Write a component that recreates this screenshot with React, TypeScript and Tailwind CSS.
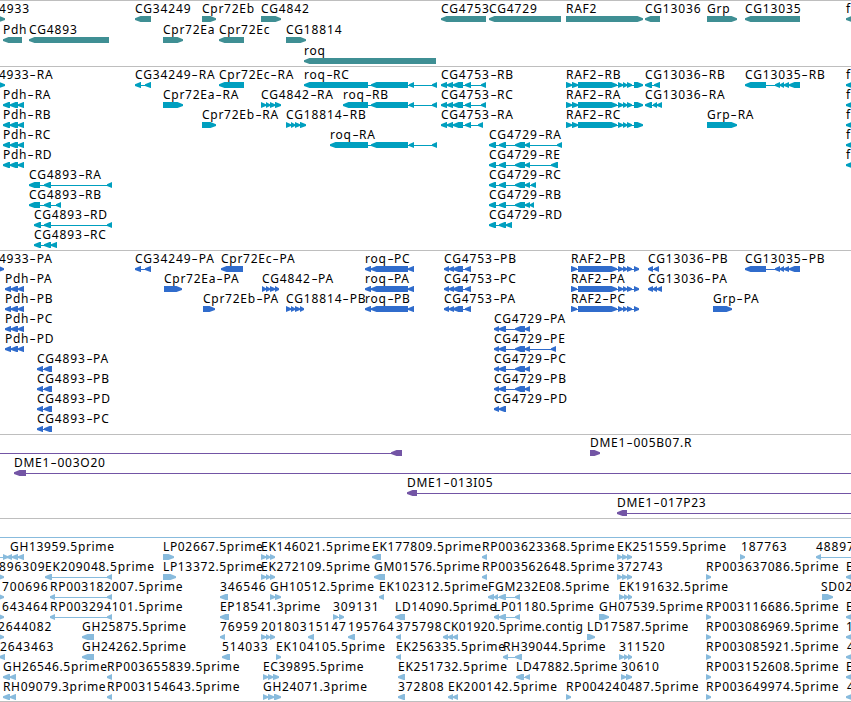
import { Fragment } from 'react'

type Strand = '+' | '-'
type Span = [number, number]

type Feature = {
  name: string
  strand: Strand
  exons: Span[]
  labelX?: number
  // where the connecting line runs when it leaves the visible region
  reach?: Span
}

type Track = {
  id: string
  color: string
  className: string
  rowClassName: string
  rows: Feature[][]
}

const feature = (
  name: string,
  strand: Strand,
  exons: Span[],
  extra: Pick<Feature, 'labelX' | 'reach'> = {},
): Feature => ({ name, strand, exons, ...extra })

const edge = (name: string, labelX = 846): Feature => feature(name, '-', [[846, 858]], { labelX })

const genes: Feature[][] = [
  [
    feature('4933', '+', [[-10, 5]], { labelX: -1 }),
    feature('CG34249', '-', [[135, 151]]),
    feature('Cpr72Eb', '+', [[202, 216]]),
    feature('CG4842', '+', [[261, 281]]),
    feature('CG4753', '-', [[441, 486]]),
    feature('CG4729', '-', [[489, 561]]),
    feature('RAF2', '+', [[566, 643]]),
    feature('CG13036', '-', [[645, 660]]),
    feature('Grp', '+', [[707, 737]]),
    feature('CG13035', '-', [[745, 800]]),
    edge('f'),
  ],
  [
    feature('Pdh', '-', [[3, 22]]),
    feature('CG4893', '-', [[29, 109]]),
    feature('Cpr72Ea', '+', [[163, 183]]),
    feature('Cpr72Ec', '-', [[219, 244]]),
    feature('CG18814', '+', [[286, 306]]),
  ],
  [feature('roq', '-', [[304, 436]])],
]

const pdhR: Span[] = [[3, 10], [10, 18], [18, 24]]
const roqTail: Span[] = [[371, 408], [409, 414], [432, 437]]
const cg4753R: Span[] = [[441, 447], [447, 453], [453, 463], [465, 471], [481, 486]]
const cg4729R: Span[] = [[489, 496], [499, 506], [515, 525]]
const raf2R: Span[] = [[566, 572], [572, 578], [578, 617], [618, 623], [623, 627], [627, 632], [634, 643]]
const cg13035: Span[] = [[745, 766], [775, 780], [780, 784], [784, 789], [789, 800]]

const transcripts: Feature[][] = [
  [
    feature('4933-RA', '+', [[-5, 5]], { labelX: -1 }),
    feature('CG34249-RA', '-', [[135, 141], [145, 151]]),
    feature('Cpr72Ec-RA', '-', [[219, 244]]),
    feature('roq-RC', '-', [[304, 368], ...roqTail]),
    feature('CG4753-RB', '-', cg4753R),
    feature('RAF2-RB', '+', raf2R),
    feature('CG13036-RB', '-', [[645, 652], [654, 660]]),
    feature('CG13035-RB', '-', cg13035),
    edge('f'),
  ],
  [
    feature('Pdh-RA', '-', pdhR),
    feature('Cpr72Ea-RA', '+', [[163, 183]]),
    feature('CG4842-RA', '+', [[261, 266], [266, 270], [270, 275], [275, 281]]),
    feature('roq-RB', '-', [[343, 368], ...roqTail]),
    feature('CG4753-RC', '-', cg4753R),
    feature('RAF2-RA', '+', raf2R),
    feature('CG13036-RA', '-', [[645, 652], [653, 657], [657, 662]]),
    edge('f'),
  ],
  [
    feature('Pdh-RB', '-', pdhR),
    feature('Cpr72Eb-RA', '+', [[202, 216]]),
    feature('CG18814-RB', '+', [[286, 291], [291, 295], [295, 300], [300, 306]]),
    feature('CG4753-RA', '-', [...cg4753R.slice(0, 4), [478, 483]]),
    feature('RAF2-RC', '+', raf2R),
    feature('Grp-RA', '+', [[707, 737]]),
    edge('f'),
  ],
  [
    feature('Pdh-RC', '-', pdhR),
    feature('roq-RA', '-', [[330, 368], ...roqTail]),
    feature('CG4729-RA', '-', [...cg4729R, [525, 530], [557, 562]]),
    edge('f'),
  ],
  [
    feature('Pdh-RD', '-', pdhR),
    feature('CG4729-RE', '-', [...cg4729R, [525, 530], [551, 558]]),
    edge('f'),
  ],
  [
    feature('CG4893-RA', '-', [[29, 40], [44, 51], [107, 112]]),
    feature('CG4729-RC', '-', [...cg4729R, [525, 530], [531, 536]]),
  ],
  [
    feature('CG4893-RB', '-', [[29, 40], [44, 51], [56, 61]]),
    feature('CG4729-RB', '-', [...cg4729R, [525, 530], [530, 534]]),
  ],
  [
    feature('CG4893-RD', '-', [[34, 41], [44, 51], [107, 112]]),
    feature('CG4729-RD', '-', [[489, 496], [499, 506], [506, 512]]),
  ],
  [feature('CG4893-RC', '-', [[34, 41], [44, 51], [51, 57]])],
]

const pdhP: Span[] = [[5, 11], [11, 18], [18, 24]]
const roqP: Span[] = [[365, 371], [371, 408], [408, 414]]
const cg4753P: Span[] = [[444, 449], [449, 454], [453, 463], [465, 471]]
const cg4729P: Span[] = [[494, 499], [499, 506], [515, 525], [525, 530]]
const cg4893P: Span[] = [[37, 43], [44, 52]]
const raf2P: Span[] = [[571, 577], [578, 617], [618, 623], [623, 627], [627, 632], [634, 639]]

const proteins: Feature[][] = [
  [
    feature('4933-PA', '+', [[-5, 4]], { labelX: -1 }),
    feature('CG34249-PA', '-', [[135, 141], [145, 151]]),
    feature('Cpr72Ec-PA', '-', [[221, 243]]),
    feature('roq-PC', '-', roqP),
    feature('CG4753-PB', '-', cg4753P),
    feature('RAF2-PB', '+', raf2P),
    feature('CG13036-PB', '-', [[648, 653], [654, 659]]),
    feature('CG13035-PB', '-', cg13035),
  ],
  [
    feature('Pdh-PA', '-', pdhP),
    feature('Cpr72Ea-PA', '+', [[164, 182]]),
    feature('CG4842-PA', '+', [[262, 266], [266, 270], [270, 275], [275, 279]]),
    feature('roq-PA', '-', roqP),
    feature('CG4753-PC', '-', cg4753P),
    feature('RAF2-PA', '+', raf2P),
    feature('CG13036-PA', '-', [[648, 653], [653, 657], [657, 662]]),
  ],
  [
    feature('Pdh-PB', '-', pdhP),
    feature('Cpr72Eb-PA', '+', [[203, 215]]),
    feature('CG18814-PB', '+', [[286, 291], [291, 295], [295, 300], [300, 304]]),
    feature('roq-PB', '-', roqP),
    feature('CG4753-PA', '-', cg4753P),
    feature('RAF2-PC', '+', raf2P),
    feature('Grp-PA', '+', [[713, 732]]),
  ],
  [feature('Pdh-PC', '-', pdhP), feature('CG4729-PA', '-', cg4729P)],
  [feature('Pdh-PD', '-', pdhP), feature('CG4729-PE', '-', [...cg4729P, [551, 556]])],
  [feature('CG4893-PA', '-', cg4893P), feature('CG4729-PC', '-', cg4729P)],
  [feature('CG4893-PB', '-', cg4893P), feature('CG4729-PB', '-', cg4729P)],
  [feature('CG4893-PD', '-', cg4893P), feature('CG4729-PD', '-', cg4729P.slice(0, 2))],
  [feature('CG4893-PC', '-', cg4893P)],
]

const clones: Feature[][] = [
  [feature('', '-', [[391, 402]], { reach: [-5, 402] }), feature('DME1-005B07.R', '+', [[590, 600]])],
  [feature('DME1-003O20', '-', [[14, 26]], { reach: [14, 856] })],
  [feature('DME1-013I05', '-', [[407, 417]], { reach: [407, 856] })],
  [feature('DME1-017P23', '-', [[617, 627]], { reach: [617, 856] })],
]

const triplet: Span[] = [[617, 622], [622, 627], [627, 632]]
const ekTriplet: Span[] = [[261, 266], [266, 270], [270, 275]]
const rpStart: Span[] = [[706, 711]]

const ests: Feature[][] = [
  [
    feature('', '+', [[3, 8]], { reach: [-5, 8] }),
    feature('GH13959.5prime', '-', [[7, 12], [12, 18], [18, 24]], { labelX: 10 }),
    feature('LP02667.5prime', '+', [[163, 174]]),
    feature('EK146021.5prime', '+', ekTriplet),
    feature('EK177809.5prime', '-', [[372, 381]]),
    feature('RP003623368.5prime', '-', [[482, 487]]),
    feature('EK251559.5prime', '+', triplet),
    feature('187763', '+', [[740, 745]], { labelX: 741 }),
    feature('488975', '-', [[816, 821]], { reach: [816, 856] }),
  ],
  [
    feature('896309', '+', [[-3, 4]], { labelX: -1 }),
    feature('EK209048.5prime', '-', [[45, 52], [107, 112]]),
    feature('LP13372.5prime', '+', [[163, 176]]),
    feature('EK272109.5prime', '+', ekTriplet),
    feature('GM01576.5prime', '-', [[374, 385]]),
    feature('RP003562648.5prime', '-', [[482, 487]]),
    feature('372743', '+', triplet),
    feature('RP003637086.5prime', '+', rpStart),
    edge('E'),
  ],
  [
    feature('700696', '+', [[-3, 4]], { labelX: 2 }),
    feature('RP003182007.5prime', '-', [[50, 55], [107, 112]]),
    feature('346546', '-', [[220, 228]]),
    feature('GH10512.5prime', '+', [[270, 275], [275, 281]]),
    feature('EK102312.5prime', '-', [[379, 384]]),
    feature('FGM232E08.5prime', '-', [[488, 494], [494, 498], [499, 506], [515, 520]]),
    feature('EK191632.5prime', '+', [[619, 624], [624, 628], [628, 632]]),
    feature('SD02', '+', [[822, 833]], { labelX: 821 }),
  ],
  [
    feature('643464', '+', [[-3, 4]], { labelX: 2 }),
    feature('RP003294101.5prime', '-', [[50, 55], [107, 112]]),
    feature('EP18541.3prime', '-', [[220, 229]]),
    feature('309131', '+', [[333, 338], [339, 344]]),
    feature('LD14090.5prime', '-', [[395, 405]]),
    feature('LP01180.5prime', '-', [[494, 499], [499, 506], [515, 520]]),
    feature('GH07539.5prime', '+', [[599, 609]]),
    feature('RP003116686.5prime', '+', rpStart),
    edge('E'),
  ],
  [
    feature('2644082', '+', [[-3, 4]], { labelX: -2 }),
    feature('GH25875.5prime', '-', [[82, 94]]),
    feature('76959', '-', [[220, 225]]),
    feature('201803', '+', ekTriplet),
    feature('15147', '-', [[308, 314]]),
    feature('195764', '-', [[348, 355]]),
    feature('375798', '-', [[396, 401]]),
    feature('CK01920.5prime.contig', '-', [[443, 448], [448, 453], [453, 458]]),
    feature('LD17587.5prime', '+', [[587, 595]]),
    feature('RP003086969.5prime', '+', rpStart),
    edge('1'),
  ],
  [
    feature('2643463', '-', [[-1, 5]], { labelX: 0 }),
    feature('GH24262.5prime', '-', [[82, 94]]),
    feature('514033', '-', [[222, 230]]),
    feature('EK104105.5prime', '+', [[276, 281]]),
    feature('EK256335.5prime', '-', [[396, 401]]),
    feature('RH39044.5prime', '-', [[503, 508], [515, 522]]),
    feature('311520', '+', [[619, 624], [624, 628], [628, 632]]),
    feature('RP003085921.5prime', '+', rpStart),
    edge('4', 847),
  ],
  [
    feature('GH26546.5prime', '-', [[3, 10], [10, 16]]),
    feature('RP003655839.5prime', '-', [[107, 112]]),
    feature('EC39895.5prime', '+', [[263, 268], [268, 273], [273, 279]]),
    feature('EK251732.5prime', '-', [[398, 405]]),
    feature('LD47882.5prime', '-', [[516, 524], [525, 530]]),
    feature('30610', '+', [[621, 626], [626, 632]]),
    feature('RP003152608.5prime', '+', rpStart),
    edge('E'),
  ],
  [
    feature('RH09079.3prime', '-', [[3, 10], [10, 16]]),
    feature('RP003154643.5prime', '-', [[107, 112]]),
    feature('GH24071.3prime', '+', [[263, 268], [268, 274], [274, 281]]),
    feature('372808', '-', [[398, 405]]),
    feature('EK200142.5prime', '-', [[448, 453], [453, 458]]),
    feature('RP004240487.5prime', '+', [[566, 571]]),
    feature('RP003649974.5prime', '+', rpStart),
    edge('4', 847),
  ],
]

const tracks: Track[] = [
  { id: 'genes', color: '#3f8f94', className: 'border-[#bebebe] pb-[2px]', rowClassName: 'h-[21px]', rows: genes },
  { id: 'transcripts', color: '#009fbf', className: 'border-[#bebebe] pb-[3px]', rowClassName: 'h-5', rows: transcripts },
  { id: 'proteins', color: '#306ccc', className: 'border-[#bebebe] pb-[3px]', rowClassName: 'h-5', rows: proteins },
  { id: 'clones', color: '#7355a5', className: 'border-[#bebebe] pb-[3px]', rowClassName: 'h-5', rows: clones },
  { id: 'ests', color: '#88bbdd', className: 'border-[#88bbdd] pt-px pb-[2px]', rowClassName: 'h-5', rows: ests },
]

function exonPoints([start, end]: Span, strand: Strand, offset: number) {
  const head = Math.min(end - start, 5.5)
  const [tip, tail, dir] = strand === '+' ? [end - offset, start - offset, -1] : [start - offset, end - offset, 1]
  const neck = tip + head * dir
  return `${tip},2.2 ${neck},0 ${tail},0 ${tail},6 ${neck},6 ${tip},4`
}

function Glyph({ color, exons, reach, strand }: { color: string; exons: Span[]; reach: Span; strand: Strand }) {
  const [start, end] = reach
  return (
    <svg className="block overflow-visible" fill={color} height={6} width={end - start}>
      <rect height={1} width={end - start} y={3} />
      {exons.map((exon) => (
        <polygon key={exon[0]} points={exonPoints(exon, strand, start)} />
      ))}
    </svg>
  )
}

function labelTracking(name: string) {
  if (/^\d+$/.test(name)) return 'tracking-[0.9px]'
  if (name.endsWith('.contig')) return 'tracking-[0.43px]'
  if (/^[A-Z]{2}\d{5}\./.test(name)) return 'tracking-[0.65px]'
  if (/^CG\d+/.test(name)) return 'tracking-[0.85px]'
  return 'tracking-[0.73px]'
}

// hyphens are drawn wider than the font's own
function Label({ name }: { name: string }) {
  const [head, ...rest] = name.split('-')
  return (
    <>
      {head}
      {rest.map((part) => (
        <Fragment key={part}>
          <span className="inline-block w-[7.4px] scale-x-160 text-center tracking-normal">-</span>
          {part}
        </Fragment>
      ))}
    </>
  )
}

function FeatureItem({ color, item }: { color: string; item: Feature }) {
  const reach: Span = item.reach ?? [item.exons[0][0], item.exons[item.exons.length - 1][1]]
  const labelX = item.labelX ?? reach[0]
  return (
    <div className="absolute top-px" style={{ left: reach[0] }}>
      <p
        className={`h-3.5 w-0 whitespace-nowrap ${labelTracking(item.name)}`}
        style={{ marginLeft: labelX - reach[0] }}
      >
        <Label name={item.name} />
      </p>
      <Glyph color={color} exons={item.exons} reach={reach} strand={item.strand} />
    </div>
  )
}

function TrackPanel({ track }: { track: Track }) {
  return (
    <section className={`border-t ${track.className}`}>
      {track.rows.map((row, index) => (
        <div key={index} className={`relative ${track.rowClassName}`}>
          {row.map((item) => (
            <FeatureItem key={`${item.name}-${item.exons[0][0]}`} color={track.color} item={item} />
          ))}
        </div>
      ))}
    </section>
  )
}

export default function App() {
  return (
    <main className="h-[702px] w-[851px] overflow-hidden bg-white font-['Noto_Sans',sans-serif] text-[12px] leading-[13px] text-black">
      {tracks.slice(0, 4).map((track) => (
        <TrackPanel key={track.id} track={track} />
      ))}
      <div className="h-[19px] border-t border-[#bebebe]" />
      <TrackPanel track={tracks[4]} />
      <div className="border-t border-[#bebebe]" />
    </main>
  )
}
